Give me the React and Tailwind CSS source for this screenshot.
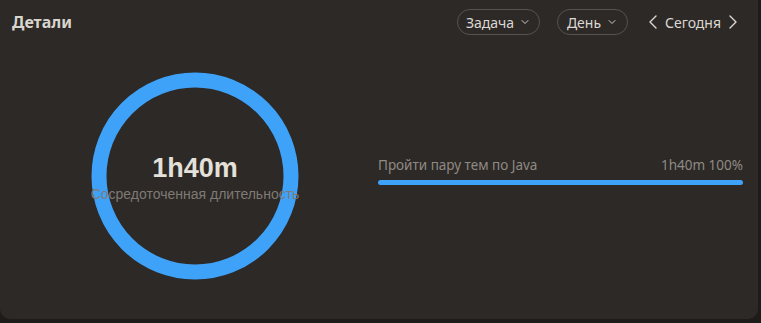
import { ChevronDown, ChevronLeft, ChevronRight } from 'lucide-react'

const ui = { fontFamily: '"Noto Sans", "DejaVu Sans", sans-serif' }
const arial = { fontFamily: '"Liberation Sans", Arial, sans-serif' }

function Pill({ label, width }) {
  return (
    <button
      className={`h-[26px] ${width} flex items-center justify-center gap-[5px] rounded-full border border-[#57534e] text-[14px] text-[#dcd8d2]`}
      style={ui}
    >
      <span>{label}</span>
      <ChevronDown size={12} strokeWidth={2} className="text-[#cfcac4]" />
    </button>
  )
}

function Ring() {
  return (
    <div className="relative w-[208px] h-[208px] shrink-0">
      <svg width="208" height="208" viewBox="0 0 208 208">
        <circle cx="104" cy="104" r="96" fill="none" stroke="#3fa2f9" strokeWidth="15" />
      </svg>
      <div className="absolute inset-0 flex flex-col items-center justify-center pt-[4px]" style={arial}>
        <p className="text-[27px] leading-[30px] font-bold text-[#e4e0da]">1h40m</p>
        <p className="text-[14px] leading-[18px] text-[#7f7a74] whitespace-nowrap mt-[2px]">Сосредоточенная длительность</p>
      </div>
    </div>
  )
}

export default function App() {
  return (
    <div className="w-[761px] h-[323px] bg-[#1e1c1a] overflow-hidden">
      <div className="w-[758px] h-[319px] bg-[#2c2926] rounded-b-[10px] flex flex-col">
        {/* Header */}
        <div className="h-[44px] pl-3 pr-[13px] flex items-center justify-between">
          <h1 className="text-[16px] font-bold text-[#d8d4ce]" style={ui}>Детали</h1>
          <div className="flex items-center">
            <Pill label="Задача" width="w-[83px]" />
            <div className="w-[17px]" />
            <Pill label="День" width="w-[71px]" />
            <div className="flex items-center ml-[13px] text-[#dcd8d2]" style={ui}>
              <ChevronLeft size={24} strokeWidth={1.4} />
              <span className="text-[14px]">Сегодня</span>
              <ChevronRight size={24} strokeWidth={1.4} />
            </div>
          </div>
        </div>

        {/* Body */}
        <div className="flex items-start pl-[91px] pt-[28px]">
          <Ring />
          <div className="ml-[79px] w-[365px] pt-[84px]">
            <div className="flex items-center justify-between text-[13.5px] leading-[18px] text-[#8f8a84]" style={ui}>
              <span>Пройти пару тем по Java</span>
              <span>1h40m 100%</span>
            </div>
            <div className="mt-[6px] h-[5px] rounded-full bg-[#3fa2f9]" />
          </div>
        </div>
      </div>
    </div>
  )
}
